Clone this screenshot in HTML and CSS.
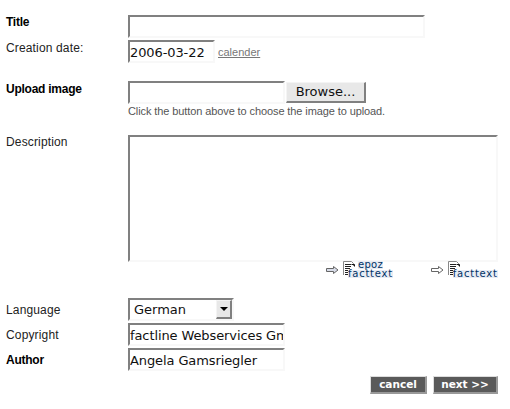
FILE: index.html
```html
<!DOCTYPE html>
<html lang="en">
<head>
    <meta charset="UTF-8">
    <title>Upload image</title>
    <link rel="stylesheet" href="styles.css">
</head>
<body>
    <form class="edit-form">
        <div class="row row-title">
            <label class="label bold">Title</label>
            <input class="field field-title" type="text">
        </div>
        <div class="row row-date">
            <label class="label">Creation date:</label>
            <input class="field field-date" type="text" value="2006-03-22">
            <a class="calendar-link" href="#">calender</a>
        </div>
        <div class="row row-upload">
            <label class="label bold">Upload image</label>
            <div class="upload-box">
                <div class="upload-line">
                    <input class="field field-short" type="text">
                    <span class="browse-btn">Browse...</span>
                </div>
                <p class="hint">Click the button above to choose the image to upload.</p>
            </div>
        </div>
        <div class="row row-desc">
            <label class="label">Description</label>
            <textarea class="field field-desc"></textarea>
        </div>
        <div class="editors">
            <a class="editor" href="#">
                <svg class="arrow" width="13" height="8" viewBox="0 0 13 8"><path d="M.5 2.500h7V.5L12 4 7.500 7.500v-2h-7z" fill="#d8dce8" stroke="#666"/></svg>
                <svg class="doc" width="14" height="15" viewBox="0 0 14 15"><path d="M.5 14V.5h8l2 2V5" fill="none" stroke="#888"/><path d="M2 3.500h6M2 5.500h6M2 7.500h5M2 9.500h3M2 11.500h3M2 13.500h3" stroke="#222"/><path d="M8.500 3.500h3v2" fill="none" stroke="#111"/></svg>
                <span class="editor-text"><span class="tag">epoz</span><span class="tag-main">facttext</span></span>
            </a>
            <a class="editor" href="#">
                <svg class="arrow" width="13" height="8" viewBox="0 0 13 8"><path d="M.5 2.500h7V.5L12 4 7.500 7.500v-2h-7z" fill="#fff" stroke="#666"/></svg>
                <svg class="doc" width="14" height="15" viewBox="0 0 14 15"><path d="M.5 14V.5h8l2 2V5" fill="none" stroke="#888"/><path d="M2 3.500h6M2 5.500h6M2 7.500h5M2 9.500h3M2 11.500h3M2 13.500h3" stroke="#222"/><path d="M8.500 3.500h3v2" fill="none" stroke="#111"/></svg>
                <span class="editor-text"><span class="tag tag-empty"></span><span class="tag-main">facttext</span></span>
            </a>
        </div>
        <div class="row row-lang">
            <label class="label">Language</label>
            <div class="select-box">
                <span class="select-value">German</span>
                <span class="select-btn"><svg width="8" height="4" viewBox="0 0 8 4"><path d="M0 0h8L4 4z" fill="#000"/></svg></span>
            </div>
        </div>
        <div class="row row-copy">
            <label class="label">Copyright</label>
            <input class="field field-short" type="text" value="factline Webservices GmbH">
        </div>
        <div class="row row-copy">
            <label class="label bold">Author</label>
            <input class="field field-short" type="text" value="Angela Gamsriegler">
        </div>
        <div class="actions">
            <a class="btn btn-cancel" href="#">cancel</a>
            <a class="btn btn-next" href="#">next &gt;&gt;</a>
        </div>
    </form>
</body>
</html>
```

FILE: styles.css
```css
html, body {
    margin: 0;
    padding: 0;
    background: #fff;
}
body {
    font-family: "Liberation Sans", Arial, sans-serif;
    font-size: 12px;
    color: #222;
    overflow: hidden;
}
.edit-form {
    width: 510px;
    height: 409px;
    padding-top: 15px;
    box-sizing: border-box;
}
.row {
    display: flex;
    align-items: flex-start;
}
.label {
    width: 122px;
    margin-left: 6px;
    flex: none;
    line-height: 14px;
    letter-spacing: 0.15px;
}
.bold {
    font-weight: bold;
    color: #000;
    letter-spacing: -0.25px;
}
.field {
    display: block;
    box-sizing: border-box;
    height: 23px;
    margin: 0;
    padding: 1px 0 0;
    border-style: solid;
    border-width: 2px;
    border-color: #808080 #f8f8f8 #f8f8f8 #808080;
    background: #fff;
    color: #111;
    font-family: "DejaVu Sans", sans-serif;
    font-size: 13px;
    letter-spacing: -0.1px;
    outline: none;
    border-radius: 0;
}
.field-title {
    width: 297px;
}
.row-date {
    margin-top: 2px;
}
.row-date .label {
    padding-top: 1px;
}
.field-date {
    width: 87px;
}
.calendar-link {
    margin: 6px 0 0 3px;
    font-size: 11px;
    color: #777;
}
.row-upload {
    margin-top: 18px;
}
.row-upload .label {
    padding-top: 1px;
}
.upload-line {
    display: flex;
    align-items: flex-start;
}
.field-short {
    width: 157px;
}
.browse-btn {
    box-sizing: border-box;
    width: 80px;
    height: 21px;
    margin: 1px 0 0 1px;
    border-style: solid;
    border-width: 1px 2px 2px 1px;
    border-color: #f4f4f4 #808080 #808080 #f4f4f4;
    background: #e8e8e8;
    color: #111;
    font-family: "DejaVu Sans", sans-serif;
    font-size: 13px;
    line-height: 18px;
    text-align: center;
}
.hint {
    margin: 1px 0 0;
    font-size: 11px;
    letter-spacing: -0.1px;
    line-height: 12px;
    color: #555;
}
.row-desc {
    margin-top: 18px;
}
.field-desc {
    width: 370px;
    height: 127px;
    resize: none;
    overflow: hidden;
}
.editors {
    display: flex;
    gap: 38px;
    height: 37px;
    margin-top: -1px;
    padding-left: 326px;
}
.editor {
    display: flex;
    align-items: flex-start;
    text-decoration: none;
}
.arrow {
    margin: 5px 4px 0 0;
    flex: none;
}
.doc {
    margin-right: -9px;
    flex: none;
}
.editor-text {
    display: flex;
    flex-direction: column;
    align-items: flex-start;
    font-family: "DejaVu Sans", sans-serif;
    font-size: 10px;
    line-height: 8px;
    color: #003366;
}
.tag {
    height: 8px;
    margin-left: 10px;
    letter-spacing: 0.3px;
    background: #e8ecf4;
}
.tag-empty {
    background: none;
}
.tag-main {
    height: 8px;
    margin-top: 1px;
    letter-spacing: 0.75px;
    background: #e8ecf4;
}
.select-box {
    box-sizing: border-box;
    display: flex;
    justify-content: space-between;
    width: 106px;
    height: 23px;
    border-style: solid;
    border-width: 2px;
    border-color: #808080 #f8f8f8 #f8f8f8 #808080;
    font-family: "DejaVu Sans", sans-serif;
    font-size: 13px;
    color: #111;
}
.select-value {
    padding: 2px 0 0 4px;
}
.select-btn {
    box-sizing: border-box;
    display: flex;
    align-items: center;
    justify-content: center;
    width: 16px;
    height: 19px;
    border-style: solid;
    border-width: 1px 2px 2px 1px;
    border-color: #f4f4f4 #808080 #808080 #f4f4f4;
    background: #e8e8e8;
}
.row-lang .label,
.row-copy .label {
    padding-top: 5px;
}
.row-copy {
    margin-top: 2px;
}
.actions {
    display: flex;
    justify-content: flex-end;
    gap: 6px;
    margin-top: 5px;
    padding-right: 12px;
}
.btn {
    box-sizing: border-box;
    height: 18px;
    border-style: solid;
    border-width: 1px 2px 2px 1px;
    border-color: #ddd #999 #999 #ddd;
    background: #5a5a5a;
    color: #fff;
    font-family: "DejaVu Sans", sans-serif;
    font-size: 10.5px;
    font-weight: bold;
    line-height: 15px;
    text-align: center;
    text-decoration: none;
}
.btn-cancel {
    width: 57px;
}
.btn-next {
    width: 65px;
}
```
